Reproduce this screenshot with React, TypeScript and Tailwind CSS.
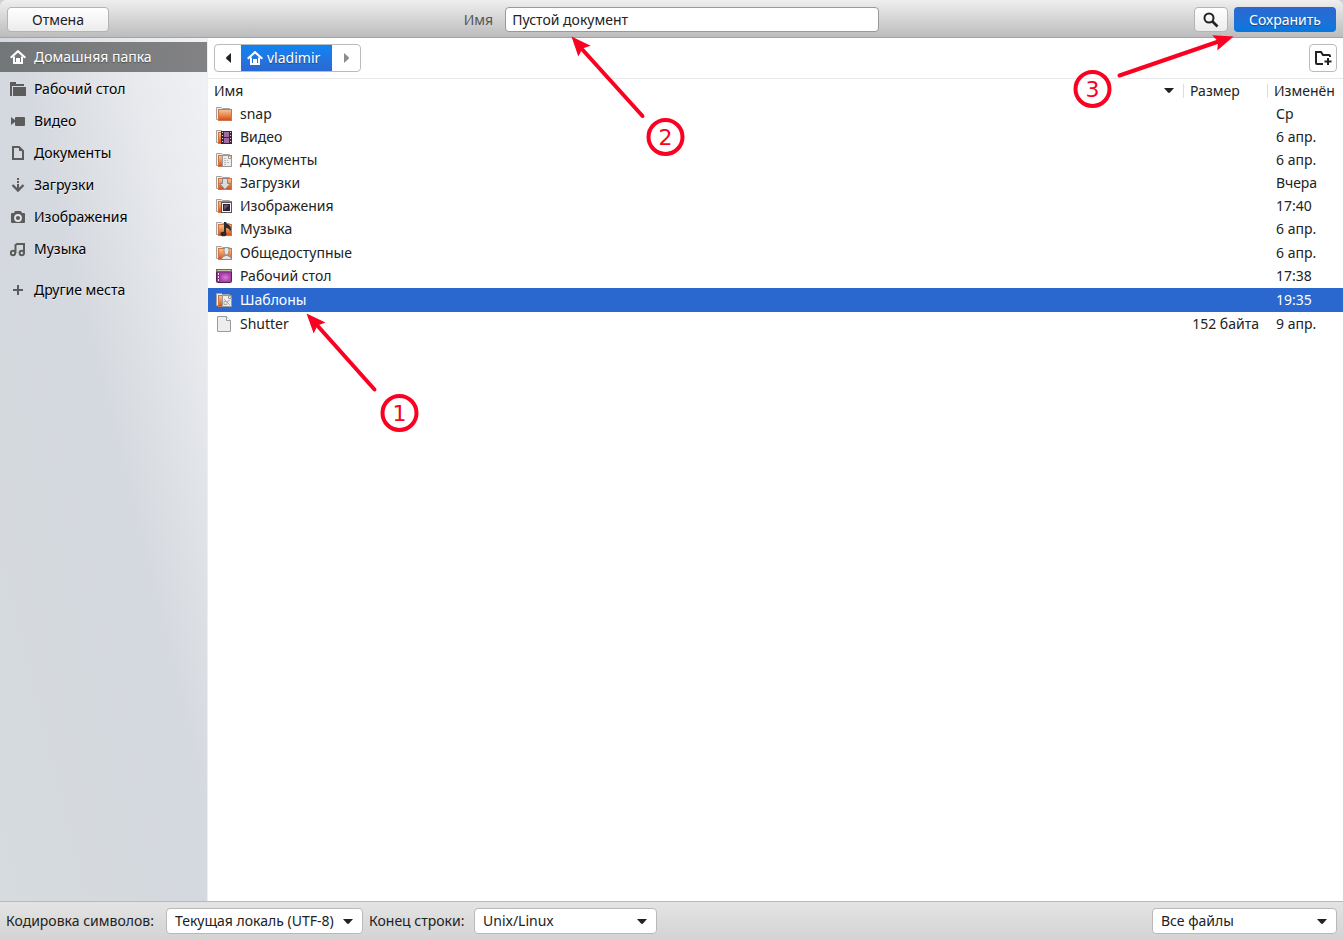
import type { ReactNode } from 'react';
import { useState } from 'react';

const GREY = '#5c5c5c';

function HomeIcon() {
  return (
    <svg width="16" height="16" viewBox="0 0 16 16" fill="none" stroke="currentColor" strokeWidth="2" aria-hidden="true">
      <path d="M.7 8.800 8 2.300l7.300 6.500" strokeWidth="2.200" />
      <path d="M4 7.500V14h3v-4h2v4h3V7.500" />
    </svg>
  );
}

function DesktopFolderIcon() {
  return (
    <svg width="16" height="16" viewBox="0 0 16 16" fill={GREY} aria-hidden="true">
      <path d="M0 1h6v2h8v2H2v10H0Z" />
      <path d="M3 6h13v9H3Z" />
    </svg>
  );
}

function VideoIcon() {
  return (
    <svg width="16" height="16" viewBox="0 0 16 16" fill={GREY} aria-hidden="true">
      <path d="M1 4v8l4-3V7Z" />
      <rect x="5" y="4" width="10" height="9" rx="1" />
    </svg>
  );
}

function DocumentIcon() {
  return (
    <svg width="16" height="16" viewBox="0 0 16 16" fill="none" stroke={GREY} strokeWidth="2" aria-hidden="true">
      <path d="M3 2h6l4 4v8H3Z" />
      <path d="M9 2v4h4Z" fill={GREY} stroke="none" />
    </svg>
  );
}

function DownloadIcon() {
  return (
    <svg width="16" height="16" viewBox="0 0 16 16" fill="none" stroke={GREY} strokeWidth="2" aria-hidden="true">
      <path d="M8 1v2M8 4v2M8 7v6" />
      <path d="m2.500 8 5.500 5.500L13.500 8" strokeWidth="2.400" />
    </svg>
  );
}

function CameraIcon() {
  return (
    <svg width="16" height="16" viewBox="0 0 16 16" aria-hidden="true">
      <path d="M5 2h6l1 2h2q1 0 1 1v8q0 1-1 1H2q-1 0-1-1V5q0-1 1-1h2Z" fill={GREY} />
      <circle cx="8" cy="9" r="3" fill={GREY} stroke="#e2e5e9" strokeWidth="1.800" />
    </svg>
  );
}

function NotesIcon() {
  return (
    <svg width="16" height="16" viewBox="0 0 16 16" fill="none" stroke={GREY} strokeWidth="2" aria-hidden="true">
      <circle cx="3" cy="12" r="2.200" />
      <circle cx="11.800" cy="12" r="2.200" />
      <path d="M5.500 12V4l1.500-1h7v9" />
    </svg>
  );
}

function PlusIcon() {
  return (
    <svg width="16" height="16" viewBox="0 0 16 16" stroke={GREY} strokeWidth="2" aria-hidden="true">
      <path d="M8 3v10M3 8h10" />
    </svg>
  );
}

function SearchIcon() {
  return (
    <svg width="16" height="16" viewBox="0 0 16 16" fill="none" stroke="#222" strokeWidth="2" aria-hidden="true">
      <circle cx="6" cy="6" r="4.500" />
      <path d="m9 9 5.500 5.500" strokeWidth="2.600" />
    </svg>
  );
}

function NewFolderIcon() {
  return (
    <svg width="18" height="16" viewBox="0 0 18 16" fill="none" stroke="#222" strokeWidth="2" aria-hidden="true">
      <path d="M9 14H3q-1 0-1-1V2h5l2 3h6q1 0 1 1v1" />
      <path d="M14 8v7M10.500 11.500h7" />
    </svg>
  );
}

function Caret() {
  return (
    <svg width="10" height="5" viewBox="0 0 10 5" fill="#222" aria-hidden="true">
      <path d="M0 0h10L6 4.500Q5 5.400 4 4.500Z" />
    </svg>
  );
}

type FolderKind =
  | 'plain'
  | 'video'
  | 'documents'
  | 'downloads'
  | 'pictures'
  | 'music'
  | 'public'
  | 'desktop'
  | 'templates'
  | 'file';

function FileIcon({ kind }: { kind: FolderKind }) {
  if (kind === 'file') {
    return (
      <svg width="16" height="16" viewBox="0 0 16 16" className="block" aria-hidden="true">
        <path d="M1.500.500h9l4 4v11h-13Z" fill="#ededed" stroke="#9a9a9a" />
        <path d="M10.500.500v4h4" fill="#fff" stroke="#9a9a9a" />
      </svg>
    );
  }
  if (kind === 'desktop') {
    return (
      <svg width="16" height="16" viewBox="0 0 16 16" className="block" aria-hidden="true">
        <defs>
          <radialGradient id="desktop-glow">
            <stop offset="0" stopColor="#d77fd2" />
            <stop offset="1" stopColor="#a83fa6" />
          </radialGradient>
        </defs>
        <rect x=".5" y="1.500" width="15" height="13" rx="1" fill="#8d3390" stroke="#5a1f5c" />
        <rect x="4" y="5" width="11" height="9" fill="url(#desktop-glow)" />
        <path d="M0 1h16v3H0Z" fill="#6f6a55" />
        <path d="M1 2h14v1H1Z" fill="#c9c3a8" />
        <path d="M2 5h1v2H2ZM2 8h1v2H2ZM2 11h1v2H2Z" fill="#f1d9f0" />
      </svg>
    );
  }
  return (
    <svg width="16" height="16" viewBox="0 0 16 16" className="block" aria-hidden="true">
      <defs>
        <linearGradient id={`folder-${kind}`} x1="0" y1="0" x2="0" y2="1">
          <stop offset="0" stopColor="#f3c79b" />
          <stop offset=".5" stopColor="#e98c50" />
          <stop offset="1" stopColor="#d4481a" />
        </linearGradient>
      </defs>
      <path d="M.5 13.500v-12h5l1 1h7v11Z" fill="#f1efed" stroke="#a5a19c" />
      <rect x="2.500" y="3.500" width="13" height="11" fill={`url(#folder-${kind})`} stroke="#cf7444" />
      {kind === 'video' && (
        <g>
          <rect x="5" y="2" width="11" height="13" fill="#3a2430" />
          <path d="M8 3h5v5H8ZM8 9h5v5H8Z" fill="#a06aa5" />
          <path d="M6 3h1v1H6ZM6 6h1v1H6ZM6 9h1v1H6ZM6 12h1v1H6ZM14 3h1v1h-1ZM14 6h1v1h-1ZM14 9h1v1h-1ZM14 12h1v1h-1Z" fill="#ddd" />
        </g>
      )}
      {(kind === 'documents' || kind === 'templates') && (
        <g>
          <path d="M6.500 3.500h6l3 3v8h-9Z" fill="#ededed" stroke="#999" />
          <path d="M12.500 3.500v3h3" fill="#fff" stroke="#999" />
          {kind === 'documents' ? (
            <path d="M8 6.500h3M8 8.500h4M8 10.500h6M8 12.500h3" stroke="#bbb" strokeDasharray="2 1" />
          ) : (
            <path d="m8 7 6 6M8 9.500h3v3H8ZM11 10l3-2" stroke="#aaa" fill="none" />
          )}
        </g>
      )}
      {kind === 'downloads' && <path d="M6.500 3.500h5v5h3L9 14.500 3.500 8.500h3Z" fill="#dcdcdc" stroke="#888" />}
      {kind === 'pictures' && (
        <g>
          <rect x="5.500" y="4.500" width="10" height="10" fill="#f4f4f4" stroke="#555" />
          <rect x="7" y="6" width="7" height="7" fill="#2d2233" />
          <path d="M8 7h5L8 12Z" fill="#655478" />
        </g>
      )}
      {kind === 'music' && (
        <g fill="#2b2b2b">
          <path d="M8 1h2q0 2 3 3 2 1 2 4l-1 3q0-4-4-4v6H8Z" />
          <ellipse cx="7.500" cy="13" rx="3" ry="2.300" />
        </g>
      )}
      {kind === 'public' && (
        <g fill="#e6e6e6" stroke="#8c8c8c">
          <path d="M5.500 14.500q0-3 4-4h2q4 1 4 4Z" />
          <path d="M10.500 2.500c2 0 2.500 1 2.500 3s-1 4.500-2.500 4.500S8 7.500 8 5.500s.5-3 2.500-3Z" />
        </g>
      )}
    </svg>
  );
}

const places: { label: string; icon: ReactNode }[] = [
  { label: 'Домашняя папка', icon: <HomeIcon /> },
  { label: 'Рабочий стол', icon: <DesktopFolderIcon /> },
  { label: 'Видео', icon: <VideoIcon /> },
  { label: 'Документы', icon: <DocumentIcon /> },
  { label: 'Загрузки', icon: <DownloadIcon /> },
  { label: 'Изображения', icon: <CameraIcon /> },
  { label: 'Музыка', icon: <NotesIcon /> },
];

const files: { name: string; kind: FolderKind; size?: string; modified: string; tall?: boolean }[] = [
  { name: 'snap', kind: 'plain', modified: 'Ср' },
  { name: 'Видео', kind: 'video', modified: '6 апр.' },
  { name: 'Документы', kind: 'documents', modified: '6 апр.' },
  { name: 'Загрузки', kind: 'downloads', modified: 'Вчера' },
  { name: 'Изображения', kind: 'pictures', modified: '17:40' },
  { name: 'Музыка', kind: 'music', modified: '6 апр.', tall: true },
  { name: 'Общедоступные', kind: 'public', modified: '6 апр.' },
  { name: 'Рабочий стол', kind: 'desktop', modified: '17:38', tall: true },
  { name: 'Шаблоны', kind: 'templates', modified: '19:35', tall: true },
  { name: 'Shutter', kind: 'file', size: '152 байта', modified: '9 апр.', tall: true },
];

function PlaceButton({ label, icon, active }: { label: string; icon: ReactNode; active?: boolean }) {
  return (
    <button
      type="button"
      className={
        active
          ? 'flex h-[30px] w-full items-center gap-2 bg-gradient-to-r from-[#737678] to-[#828284] px-2.5 text-left text-white [text-shadow:0_1px_1px_rgb(0_0_0/0.4)]'
          : 'flex h-[30px] w-full items-center gap-2 px-2.5 text-left text-black [text-shadow:0_1px_0_rgb(255_255_255/0.6)]'
      }
    >
      {icon}
      {label}
    </button>
  );
}

function Combo({ id, value, label, className }: { id: string; value: string; label?: string; className: string }) {
  return (
    <div className={`relative ${className}`}>
      <select
        id={id}
        aria-label={label}
        className="h-[26px] w-full appearance-none rounded border border-[#b9b9b9] bg-white pl-2 pr-6 text-sm text-[#222]"
      >
        <option>{value}</option>
      </select>
      <span className="pointer-events-none absolute inset-y-0 right-2.5 flex items-center">
        <Caret />
      </span>
    </div>
  );
}

function Marker({ n, cx, cy, line, head }: { n: number; cx: number; cy: number; line: string; head: string }) {
  return (
    <g>
      <path d={line} stroke="#fb0021" strokeWidth="4" strokeLinecap="round" />
      <path d={head} fill="#fb0021" />
      <circle cx={cx} cy={cy} r="17" fill="none" stroke="#fb0021" strokeWidth="4" />
      <text x={cx} y={cy + 8} textAnchor="middle" fontSize="22" fill="#fb0021" className="font-['DejaVu_Sans',sans-serif]">
        {n}
      </text>
    </g>
  );
}

export default function App() {
  const [name, setName] = useState('Пустой документ');

  return (
    <div className="relative flex min-h-screen flex-col overflow-hidden bg-[#d0d0d0] font-['Noto_Sans',sans-serif] text-sm text-[#222]">
      <header className="grid h-[38px] grid-cols-[1fr_auto_1fr] items-center rounded-t-md border-b border-[#a3a3a3] bg-gradient-to-b from-[#efefef] to-[#bcbcbc] px-[7px] pt-0.5">
        <button
          type="button"
          className="h-[25px] w-[102px] rounded border border-[#b4b4b4] bg-gradient-to-b from-white to-[#ececec]"
        >
          Отмена
        </button>
        <div className="flex items-center gap-3">
          <label htmlFor="filename" className="text-[#555]">
            Имя
          </label>
          <input
            id="filename"
            value={name}
            onChange={(e) => setName(e.target.value)}
            className="h-[25px] w-[374px] rounded border border-[#999] bg-white px-1.5 outline-none"
          />
        </div>
        <div className="flex justify-end gap-1.5">
          <button
            type="button"
            aria-label="Поиск"
            className="flex h-[25px] w-[34px] items-center justify-center rounded border border-[#b4b4b4] bg-gradient-to-b from-white to-[#ececec]"
          >
            <SearchIcon />
          </button>
          <button
            type="button"
            className="h-[25px] w-[102px] rounded bg-gradient-to-b from-[#2a68d0] to-[#0478df] text-white [text-shadow:0_1px_1px_rgb(0_0_0/0.4)]"
          >
            Сохранить
          </button>
        </div>
      </header>

      <div className="flex flex-1">
        <nav className="flex w-[208px] shrink-0 flex-col gap-0.5 border-r border-[#eceef1] bg-[linear-gradient(76deg,#d6dbde_0%,#d4d8df_52%,#d9dce1_60%,#e7e9ed_80%,#f1f2f5_100%)] pt-1">
          {places.map((p, i) => (
            <PlaceButton key={p.label} label={p.label} icon={p.icon} active={i === 0} />
          ))}
          <div className="pt-[9px]">
            <PlaceButton label="Другие места" icon={<PlusIcon />} />
          </div>
        </nav>

        <main className="min-w-0 flex-1 bg-white">
          <div className="flex h-[41px] items-center justify-between border-b border-[#e8e8e8] px-1.5">
            <div className="flex h-7 overflow-hidden rounded border border-[#bbb] bg-white">
              <button type="button" aria-label="Назад" className="flex w-[26px] items-center justify-center">
                <svg width="5" height="10" viewBox="0 0 5 10" fill="#222" aria-hidden="true">
                  <path d="M5 0v10L.5 6Q-.4 5 .5 4Z" />
                </svg>
              </button>
              <button
                type="button"
                className="-my-px flex w-[91px] items-center gap-1 bg-gradient-to-b from-[#0585f5] to-[#2b68d0] pl-1.5 text-white [text-shadow:0_1px_1px_rgb(0_0_0/0.4)]"
              >
                <HomeIcon />
                vladimir
              </button>
              <button type="button" aria-label="Вперёд" className="flex w-7 items-center justify-center">
                <svg width="5" height="10" viewBox="0 0 5 10" fill="#8d8d8d" aria-hidden="true">
                  <path d="M0 0v10l4.500-4Q5.400 5 4.500 4Z" />
                </svg>
              </button>
            </div>
            <button
              type="button"
              aria-label="Создать папку"
              className="flex size-7 items-center justify-center rounded border border-[#bbb] bg-white"
            >
              <NewFolderIcon />
            </button>
          </div>

          <table className="w-full table-fixed border-collapse">
            <colgroup>
              <col />
              <col className="w-[84px]" />
              <col className="w-[76px]" />
            </colgroup>
            <thead>
              <tr className="h-[23px] text-left leading-5">
                <th className="p-0 pl-1.5 font-normal">
                  <div className="flex items-center justify-between pr-[9px]">
                    Имя
                    <Caret />
                  </div>
                </th>
                <th className="p-0 font-normal">
                  <div className="flex items-center gap-1.5">
                    <span className="h-3.5 w-px bg-[#ddd]" />
                    Размер
                  </div>
                </th>
                <th className="p-0 pr-1.5 font-normal">
                  <div className="flex items-center gap-1.5 overflow-hidden">
                    <span className="h-3.5 w-px shrink-0 bg-[#ddd]" />
                    Изменён
                  </div>
                </th>
              </tr>
            </thead>
            <tbody>
              {files.map((f) => (
                <tr
                  key={f.name}
                  className={`leading-5 ${f.tall ? 'h-6' : 'h-[23px]'} ${f.kind === 'templates' ? 'bg-[#2a68d0] text-white' : ''}`}
                >
                  <td className="p-0 pl-2">
                    <div className="flex items-center gap-2">
                      <FileIcon kind={f.kind} />
                      {f.name}
                    </div>
                  </td>
                  <td className="whitespace-nowrap p-0 pr-2 text-right">{f.size}</td>
                  <td className="whitespace-nowrap p-0 pl-[9px]">{f.modified}</td>
                </tr>
              ))}
            </tbody>
          </table>
        </main>
      </div>

      <footer className="flex h-[39px] items-center gap-1.5 border-t border-[#b9b9b9] bg-gradient-to-b from-[#e4e4e4] to-[#d3d3d3] px-1.5">
        <label htmlFor="encoding" className="min-w-[154px]">
          Кодировка символов:
        </label>
        <Combo id="encoding" value="Текущая локаль (UTF-8)" className="w-[197px]" />
        <label htmlFor="eol" className="min-w-[99px]">
          Конец строки:
        </label>
        <Combo id="eol" value="Unix/Linux" className="w-[183px]" />
        <Combo id="filter" value="Все файлы" label="Тип файлов" className="ml-auto w-[185px]" />
      </footer>

      <svg width="130" height="140" viewBox="300 300 130 140" className="pointer-events-none absolute left-[300px] top-[300px]" aria-hidden="true">
        <Marker n={1} cx={399.5} cy={413} line="M374.500 389.500 316 324" head="M306.500 313.500 325.500 322.500 317.500 325.500 313.700 333.500Z" />
      </svg>
      <svg width="130" height="130" viewBox="565 30 130 130" className="pointer-events-none absolute left-1/2 top-[30px] -ml-[107px]" aria-hidden="true">
        <Marker n={2} cx={665.5} cy={137} line="M642.500 116 581 48" head="M571.500 36.500 590.700 45.700 582.500 48.500 578.300 56.500Z" />
      </svg>
      <svg width="173" height="90" viewBox="1070 30 173 90" className="pointer-events-none absolute right-[100px] top-[30px]" aria-hidden="true">
        <Marker n={3} cx={1092.5} cy={89} line="M1119.500 75.500 1220 41" head="M1233.500 36.500 1212.300 35.300 1218 41.500 1217.300 50.500Z" />
      </svg>
    </div>
  );
}
